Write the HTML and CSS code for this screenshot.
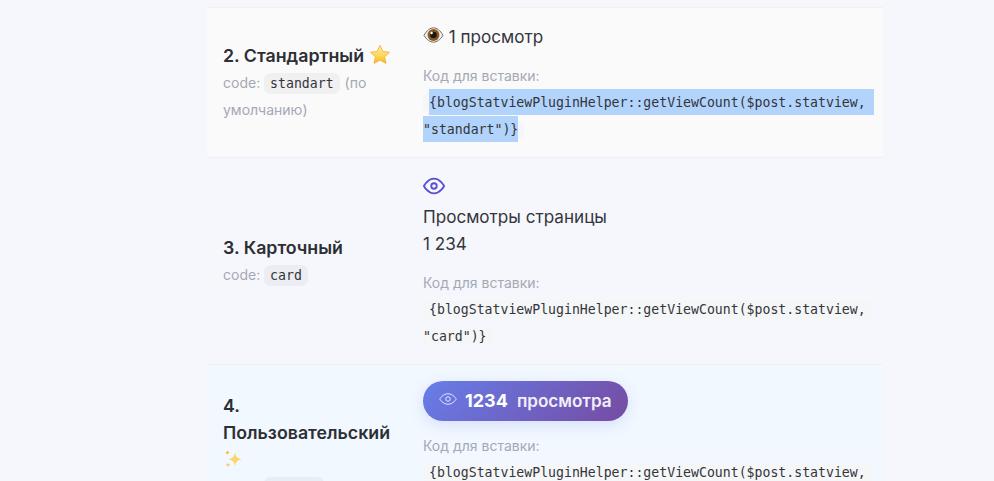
FILE: index.html
```html
<!DOCTYPE html>
<html lang="ru">
<head>
<meta charset="utf-8">
<title>Стили счётчика просмотров</title>
<link rel="stylesheet" href="styles.css">
</head>
<body>
<main class="styles-table">
  <section class="row row-standard">
    <div class="cell-name">
      <div class="name">2. Стандартный <svg class="emoji emoji-star" viewBox="0 0 22 22" aria-hidden="true"><defs><linearGradient id="starfill" x1="0" y1="0" x2="0" y2="1"><stop offset="0" stop-color="#fff3b0"/><stop offset=".55" stop-color="#fdd85a"/><stop offset="1" stop-color="#f8b72c"/></linearGradient></defs><path d="M11 1.5l2.9 6 6.6.8-4.9 4.5 1.3 6.6L11 16.1l-5.900 3.300 1.300-6.600L1.500 8.300l6.600-.8z" fill="url(#starfill)" stroke="#f2b632" stroke-width=".9" stroke-linejoin="round"/></svg></div>
      <div class="sub">code: <code class="chip">standart</code> (по умолчанию)</div>
    </div>
    <div class="cell-demo">
      <div class="demo"><svg class="emoji emoji-eye" viewBox="0 0 22 18" aria-hidden="true"><path d="M1 9.500C4 4 7.500 1.500 11 1.500s7 2.500 10 8c-3 4.500-6.500 7-10 7s-7-2.500-10-7z" fill="#f1efec" stroke="#6a6661" stroke-width="1"/><circle cx="11" cy="9" r="6.200" fill="#8a5a22"/><circle cx="11" cy="9" r="3.400" fill="#1d1510"/><circle cx="9" cy="6.800" r="1.300" fill="#fff"/></svg> 1 просмотр</div>
      <div class="label">Код для вставки:</div>
      <code class="snippet"><span class="selected">{blogStatviewPluginHelper::getViewCount($post.statview, "standart")}</span></code>
    </div>
  </section>

  <section class="row row-card">
    <div class="cell-name">
      <div class="name">3. Карточный</div>
      <div class="sub">code: <code class="chip">card</code></div>
    </div>
    <div class="cell-demo">
      <div class="card-icon"><svg class="icon-eye" viewBox="0 0 24 24" aria-hidden="true"><path d="M1 12s4-8 11-8 11 8 11 8-4 8-11 8-11-8-11-8z"/><circle cx="12" cy="12" r="3"/></svg></div>
      <div class="demo">Просмотры страницы</div>
      <div class="demo">1 234</div>
      <div class="label">Код для вставки:</div>
      <code class="snippet">{blogStatviewPluginHelper::getViewCount($post.statview, "card")}</code>
    </div>
  </section>

  <section class="row row-custom">
    <div class="cell-name">
      <div class="name">4. Пользовательский <svg class="emoji emoji-sparkles" viewBox="0 0 20 20" aria-hidden="true"><path d="M12 3.500c.8 4 1.900 5.500 6.500 6.800-4.600 1.300-5.700 2.800-6.500 6.800-.8-4-1.900-5.500-6.500-6.800C10.100 9 11.200 7.500 12 3.500z" fill="#fbd568"/><path d="M4.500 1c.3 1.700.9 2.300 2.600 2.700-1.700.4-2.300 1-2.600 2.700-.3-1.700-.9-2.300-2.600-2.700C3.600 3.300 4.200 2.700 4.500 1z" fill="#f7c04a"/><path d="M5 13.500c.3 1.500.8 2 2.300 2.400-1.500.4-2 .9-2.300 2.400-.3-1.500-.8-2-2.300-2.400 1.500-.4 2-.9 2.300-2.400z" fill="#f9cb55"/></svg></div>
      <div class="sub">code: <code class="chip">custom</code></div>
    </div>
    <div class="cell-demo">
      <div class="pill"><svg class="pill-eye" viewBox="0 0 24 24" aria-hidden="true"><path d="M1 12s4-7 11-7 11 7 11 7-4 7-11 7-11-7-11-7z"/><circle cx="12" cy="12" r="3"/></svg><span class="pill-count">1234</span><span class="pill-word">просмотра</span></div>
      <div class="label">Код для вставки:</div>
      <code class="snippet">{blogStatviewPluginHelper::getViewCount($post.statview, "custom")}</code>
    </div>
  </section>
</main>
</body>
</html>
```
FILE: styles.css
```css
* { box-sizing: border-box; }
html, body { margin: 0; height: 481px; overflow: hidden; }
body {
  background: #f5f7fc;
  color: #34363b;
  font-family: Inter, "Liberation Sans", sans-serif;
  font-size: 16px;
  line-height: 27px;
}
.styles-table { width: 676px; margin-left: 207px; padding-top: 7px; }
.row {
  display: grid;
  grid-template-columns: 200px 1fr;
  align-items: center;
  border-top: 1px solid #eef0f5;
}
.row-standard { background: #fafafb; }
.row-custom { background: #f2f8ff; }
.cell-name { padding: 16px; }
.cell-demo { padding: 16px; }
.name { font-size: 17.75px; font-weight: 600; color: #2d2f33; }
.sub { font-size: 14px; color: #a5a8b5; }
.chip {
  font-family: "DejaVu Sans Mono", monospace;
  font-size: 13.2px;
  line-height: 1;
  color: #33353a;
  background: rgba(0, 0, 0, .04);
  padding: 3px 6px;
  margin-right: 1px;
  border-radius: 6px;
}
.demo { font-size: 17.1px; line-height: 26px; padding-bottom: 1px; color: #34363b; }
.label { margin-top: 13px; font-size: 14px; line-height: 23px; color: #a5a8b5; }
.snippet {
  font-family: "DejaVu Sans Mono", monospace;
  font-size: 13.2px;
  line-height: 1;
  color: #33353a;
  background: #f5f6f8;
  padding: 2px 6px;
  border-radius: 6px;
  white-space: pre-wrap;
  vertical-align: -1px;
}
.selected { background: #b2d3fb; padding: 6px 0 5px; }
.emoji { display: inline-block; vertical-align: -4px; }
.emoji-star { width: 22px; height: 22px; }
.emoji-eye { width: 21px; height: 18px; vertical-align: -1px; }
.emoji-sparkles { width: 20px; height: 20px; vertical-align: -3px; }
.card-icon { height: 30px; display: flex; align-items: flex-start; }
.icon-eye { width: 22px; height: 24px; fill: none; stroke: #5a4fcf; stroke-width: 2; stroke-linecap: round; stroke-linejoin: round; }
.pill {
  display: inline-flex;
  align-items: center;
  height: 40px;
  padding: 0 16px 2px;
  border-radius: 20px;
  color: #fff;
  background: linear-gradient(135deg, #667eea, #764ba2);
  box-shadow: 0 4px 15px rgba(102, 126, 234, .2);
  vertical-align: top;
}
.pill-eye { width: 18px; height: 18px; margin-right: 8px; margin-top: -3px; fill: none; stroke: rgba(255, 255, 255, .85); stroke-width: 1.300; }
.pill-count { font-size: 18px; font-weight: 700; margin-right: 9px; }
.pill-word { font-size: 17.1px; font-weight: 600; opacity: .9; }
```
